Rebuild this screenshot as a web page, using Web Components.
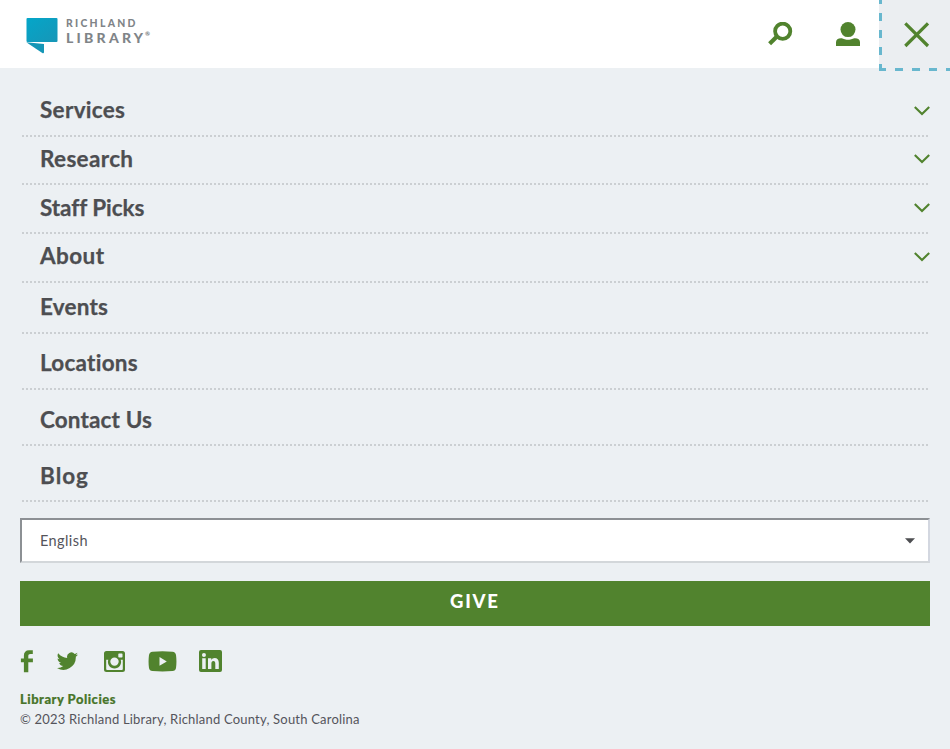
<!DOCTYPE html>
<html lang="en">
<head>
<meta charset="utf-8">
<title>Richland Library</title>
<style>
html,body{margin:0;padding:0;background:#ecf0f3;font-family:Lato,"Open Sans",sans-serif;color:#4d4e51}
body{width:950px;height:749px;overflow:hidden}
</style>
</head>
<body>
<library-page></library-page>
<script>
const define = (name, html, setup) => customElements.define(name, class extends HTMLElement {
  connectedCallback() {
    if (this.shadowRoot) return;
    this.attachShadow({mode: 'open'}).innerHTML = html;
    if (setup) setup(this, this.shadowRoot);
  }
});

/* One line of text, tracked so that it fills the width given in its attribute. */
define('fit-text', `<style>:host{display:block;white-space:nowrap}span{display:inline-block}</style><span></span>`, (el, root) => {
  const s = root.querySelector('span');
  s.textContent = el.getAttribute('text');
  const want = parseFloat(el.getAttribute('width'));
  const n = s.textContent.length;
  const have = s.getBoundingClientRect().width;
  s.style.letterSpacing = (want - have) / (n - 1) + 'px';
  el.style.width = want + 'px';
});

define('library-logo', `<style>
:host{display:flex;padding:17px 0 0 26px;gap:8.500px;color:#808488}
svg{display:block;margin-right:-.5px}
.words{display:flex;flex-direction:column}
.a{font-size:10.400px;line-height:12px;height:12px;font-weight:900}
.b{font-size:14px;line-height:17px;font-weight:900;display:flex}
.r{font-size:6px;line-height:8px;margin:1px 0 0 2px}
</style>
<svg width="32" height="37" viewBox="0 0 32 37"><defs><linearGradient id="g" x1="0" y1="0" x2="1" y2="1"><stop offset="0" stop-color="#04a6c9"/><stop offset="1" stop-color="#1796b7"/></linearGradient></defs><rect x=".5" y="1" width="31" height="24" rx="1" fill="url(#g)"/><path d="M.3 25.2 18 27v8.2q-.1 1.6-1.7.9Z" fill="#1596b6"/></svg>
<div class="words"><div class="a"><fit-text text="RICHLAND" width="69.500"></fit-text></div><div class="b"><fit-text text="LIBRARY" width="77"></fit-text><span class="r">®</span></div></div>`);

define('menu-close', `<style>
:host{display:block;box-sizing:border-box;width:71px;height:71px;padding:22px 0 0 25px;
background:
linear-gradient(#68b7ce,#68b7ce) 0 68px/7px 3px no-repeat,
repeating-linear-gradient(90deg,#68b7ce 0 8px,transparent 8px 17px) 16px 68px/55px 3px no-repeat,
repeating-linear-gradient(180deg,#68b7ce 0 4px,transparent 4px 13px,#68b7ce 13px 17px) 0 0/3px 71px no-repeat,
#ebeef1}
svg{display:block}
</style><svg width="26" height="26" viewBox="0 0 26 26"><path d="M1.3 1.3 24 24M24 1.3 1.3 24" stroke="#51832e" stroke-width="3.2"/></svg>`);

define('site-header', `<style>
:host{display:flex;height:68px;background:#fff;justify-content:space-between;align-items:flex-start}
nav{display:flex;align-items:flex-start}
svg{display:block}
.s{margin:22px 43px 0 0}.u{margin:22px 19px 0 0}
</style><library-logo></library-logo>
<nav><svg class="s" width="25" height="24" viewBox="0 0 25 24"><circle cx="14.7" cy="9.2" r="7.6" fill="none" stroke="#51832e" stroke-width="3.8"/><path d="M9.2 14.3 1.6 21.7" stroke="#51832e" stroke-width="4.2"/></svg>
<svg class="u" width="24" height="24" viewBox="0 0 24 24" fill="#51832e"><circle cx="12" cy="7.6" r="7.5"/><path d="M0 24v-3.8C0 17.4 2 16.2 5 16.2c2.2 0 3.2 1.6 7 1.6s4.800-1.600 7-1.600c3 0 5 1.200 5 4V24Z"/></svg>
<menu-close></menu-close></nav>`);

define('menu-row', `<style>
:host{display:flex;box-sizing:border-box;justify-content:space-between;align-items:flex-start;margin:0 20px;padding:var(--top) 0 0 20px;height:var(--h);
background:repeating-linear-gradient(90deg,#cbcfd2 0 2px,transparent 2px 4px) 2px 100%/906px 2px no-repeat}
.t{font-size:22.500px;font-weight:700;line-height:26px;color:#4d4e51;-webkit-text-stroke:.25px #4d4e51}
svg{display:block;margin-top:8.300px}
</style><div class="t"></div>`, (el, root) => {
  el.style.setProperty('--top', el.getAttribute('top') + 'px');
  el.style.setProperty('--h', el.getAttribute('h') + 'px');
  root.querySelector('.t').innerHTML = `<fit-text text="${el.getAttribute('label')}" width="${el.getAttribute('w')}"></fit-text>`;
  if (el.hasAttribute('more')) root.querySelector('.t').insertAdjacentHTML('afterend', `<svg style="margin-top:${el.getAttribute('more')}px" width="16" height="10" viewBox="0 0 16 10"><path d="M.8.9 8 8.1 15.200.9" fill="none" stroke="#51832e" stroke-width="2.100"/></svg>`);
});

define('language-select', `<style>
:host{display:flex;box-sizing:border-box;height:45px;margin:16px 20px 0;padding:0 13px 0 18px;background:#fff;border:2px solid;border-color:#8c9094 #d3d7e0 #d3d7da #8c9094;justify-content:space-between;align-items:center;font-size:14.500px;color:#54545b}
svg{display:block}
</style><fit-text text="English" width="47.500"></fit-text><svg width="10" height="6" viewBox="0 0 10 6"><path d="M0 .3h10L5 5.500Z" fill="#4d4e51"/></svg>`);

define('give-button', `<style>
:host{display:flex;height:45px;margin:18px 20px 0;background:#51832e;justify-content:center;color:#fff;font-size:18.500px;font-weight:900;line-height:41px}
fit-text{margin-right:2px}
</style><fit-text text="GIVE" width="48"></fit-text>`);

define('social-links', `<style>
:host{display:flex;height:24px;margin:24px 0 0 20px;align-items:flex-start}
svg{display:block;fill:#51832e;flex:none}
</style>
<svg width="13" height="23" viewBox="0 0 13 23"><path d="M3.900 22.300V12.300H.9V8.500h3V5.600C3.900 2.200 5.800.3 9 .3h3.800V4H10.500C8.800 4 8.300 4.800 8.300 6.200v2.300h4.600v3.800H8.300v10Z"/></svg>
<svg style="margin:2px 0 0 24px" width="21" height="19" viewBox="1 2 22 20" preserveAspectRatio="none"><path d="M23 4.600a9 9 0 0 1-2.600.8 4.500 4.500 0 0 0 2-2.600 9 9 0 0 1-2.900 1.200 4.550 4.550 0 0 0-7.800 4.200A13 13 0 0 1 2.300 3.300a4.500 4.500 0 0 0 1.400 6.200 4.500 4.500 0 0 1-2.100-.6c0 2.300 1.600 4.200 3.700 4.600a4.500 4.500 0 0 1-2 .1 4.600 4.600 0 0 0 4.200 3.200A9.200 9.200 0 0 1 .8 18.700 13 13 0 0 0 20.700 7a9 9 0 0 0 2.300-2.400Z"/></svg>
<svg style="margin:1px 0 0 26px" width="21" height="21" viewBox="0 0 21 21"><path fill-rule="evenodd" d="M2.500 0h16Q21 0 21 2.500v16q0 2.500-2.500 2.500h-16Q0 21 0 18.500v-16Q0 0 2.500 0ZM2.200 8.700V18q0 .9.900.9h14.800q.9 0 .9-.9V8.700h-2.100A6.600 6.600 0 1 1 4.300 8.700ZM15 2.500q-.7 0-.7.700v2.500q0 .7.700.7h2.800q.7 0 .7-.7V3.200q0-.7-.7-.7ZM10.500 6.400a4.200 4.200 0 1 0 0 8.400 4.200 4.200 0 0 0 0-8.400Z"/></svg>
<svg style="margin:1px 0 0 23px" width="29" height="21" viewBox="0 0 29 21"><path fill-rule="evenodd" d="M4.500.7Q14.500-.3 24.500.7q3 .3 3.500 3.300.9 6.500 0 13-.5 2.800-3.500 3-10 .9-20 0-3-.2-3.500-3-.9-6.500 0-13Q1.500 1 4.500.7ZM11.500 6v8.800l7.300-4.400Z"/></svg>
<svg style="margin:0 0 0 22px" width="23" height="22" viewBox="0 0 23 22"><path fill-rule="evenodd" d="M2 0h19q2 0 2 2v18q0 2-2 2H2q-2 0-2-2V2Q0 0 2 0ZM3.200 8.300V19h3.500V8.300ZM4.950 2.900a2 2 0 1 0 0 4 2 2 0 0 0 0-4ZM9 8.300V19h3.400v-5.400c0-1.700.6-2.600 2-2.600s1.900.9 1.900 2.600V19h3.500v-6.200c0-3-1.600-4.800-4.100-4.800-1.700 0-2.800.8-3.400 1.900V8.300Z"/></svg>`);

define('site-footer', `<style>
:host{display:flex;flex-direction:column;margin:15px 0 0 20px;font-size:13px;line-height:20px;color:#54545b}
.p{color:#48752a;font-weight:900;height:20px;-webkit-text-stroke:.2px #48752a}
</style><div class="p"><fit-text text="Library Policies" width="95.500"></fit-text></div><div><fit-text text="© 2023 Richland Library, Richland County, South Carolina" width="339.500"></fit-text></div>`);

define('library-page', `<style>:host{display:flex;flex-direction:column;height:749px}.list{display:flex;flex-direction:column;padding-top:19px}</style>
<site-header></site-header>
<div class="list">
<menu-row label="Services" w="85" top="10" h="50" more="9"></menu-row>
<menu-row label="Research" w="93" top="9" h="48" more="8"></menu-row>
<menu-row label="Staff Picks" w="103.500" top="10" h="49" more="8"></menu-row>
<menu-row label="About" w="64" top="9" h="49" more="9"></menu-row>
<menu-row label="Events" w="68" top="11" h="51"></menu-row>
<menu-row label="Locations" w="98" top="16" h="56"></menu-row>
<menu-row label="Contact Us" w="112" top="17" h="56"></menu-row>
<menu-row label="Blog" w="48" top="17" h="56"></menu-row>
</div>
<language-select></language-select>
<give-button></give-button>
<social-links></social-links>
<site-footer></site-footer>`);
</script>
</body>
</html>
